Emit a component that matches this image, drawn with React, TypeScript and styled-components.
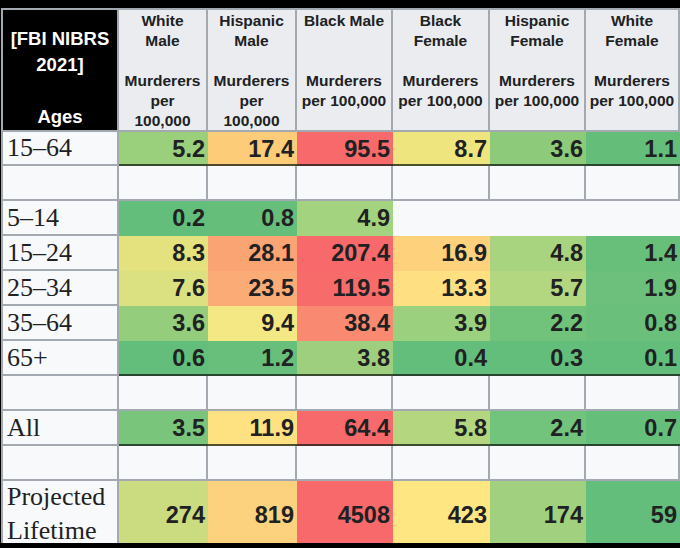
import styled, { createGlobalStyle } from "styled-components";

const GlobalStyle = createGlobalStyle`
  html, body {
    margin: 0;
    padding: 0;
    background: #000;
  }
  body {
    overflow: hidden;
  }
`;

const line = "#a2a9b1";

const Page = styled.div`
  width: 680px;
  height: 548px;
  box-sizing: border-box;
  padding: 8px 0 0 1px;
  background: #000;
  overflow: hidden;
`;

const Clip = styled.div`
  height: 535px;
  overflow: hidden;
`;

const Grid = styled.div`
  display: grid;
  grid-template-columns: 116px 89px 89px 96px 97px 96px 94px;
  grid-template-rows: 122px 34px repeat(9, 35px) 68px;
  width: max-content;
  border-top: 2px solid ${line};
  border-left: 2px solid ${line};
  background: #f8f9fa;
  color: #202122;
`;

const Corner = styled.div`
  box-sizing: border-box;
  display: flex;
  flex-direction: column;
  justify-content: flex-end;
  align-items: center;
  background: #000;
  color: #fff;
  font-family: "Liberation Sans", Arial, sans-serif;
  font-weight: 700;
  font-size: 18.5px;
  line-height: 26px;
  border-right: 2px solid ${line};
  border-bottom: 2px solid ${line};
`;

const CornerLine = styled.div`
  height: 26px;
  white-space: nowrap;
`;

const HeadCell = styled.div`
  box-sizing: border-box;
  padding-top: 1px;
  background: #eaecf0;
  font-family: "Liberation Sans", Arial, sans-serif;
  font-weight: 700;
  font-size: 15.5px;
  line-height: 20px;
  text-align: center;
  border-right: 2px solid ${line};
  border-bottom: 2px solid ${line};
`;

const HeadLine = styled.div`
  height: 20px;
  white-space: nowrap;
`;

const Label = styled.div<{ $tall?: boolean }>`
  box-sizing: border-box;
  display: flex;
  flex-direction: column;
  justify-content: center;
  padding-left: 4px;
  background: #f8f9fa;
  font-family: "Liberation Serif", "Times New Roman", serif;
  font-size: 26px;
  line-height: ${({ $tall }) => ($tall ? "34px" : "30px")};
  border-right: 2px solid ${line};
  border-bottom: 2px solid ${line};
  white-space: nowrap;
`;

const Blank = styled.div`
  box-sizing: border-box;
  background: #f8f9fa;
  border-right: 2px solid ${line};
  border-bottom: 2px solid ${line};
`;

const Filler = styled.div<{ $span: number }>`
  grid-column: span ${({ $span }) => $span};
  background: #f8f9fa;
`;

const Value = styled.div<{ $bg: string; $edge?: boolean }>`
  box-sizing: border-box;
  display: flex;
  align-items: center;
  justify-content: flex-end;
  padding-right: 3px;
  background: ${({ $bg }) => $bg};
  box-shadow: ${({ $edge }) => ($edge ? "inset 0 -2px 0 rgba(20, 30, 20, 0.75)" : "none")};
  font-family: "Liberation Sans", Arial, sans-serif;
  font-weight: 700;
  font-size: 23.5px;
  white-space: nowrap;
`;

const headers: string[][] = [
  ["White", "Male", "", "Murderers", "per", "100,000"],
  ["Hispanic", "Male", "", "Murderers", "per", "100,000"],
  ["Black Male", "", "", "Murderers", "per 100,000"],
  ["Black", "Female", "", "Murderers", "per 100,000"],
  ["Hispanic", "Female", "", "Murderers", "per 100,000"],
  ["White", "Female", "", "Murderers", "per 100,000"],
];

type Cell = [string, string];

type Row =
  | { kind: "blank" }
  | { kind: "data"; label: string[]; cells: Cell[]; edge?: boolean; tall?: boolean };

const rows: Row[] = [
  {
    kind: "data",
    label: ["15–64"],
    edge: true,
    cells: [
      ["5.2", "#9acf7b"],
      ["17.4", "#fdcc78"],
      ["95.5", "#f8696b"],
      ["8.7", "#efe57f"],
      ["3.6", "#8dcb7a"],
      ["1.1", "#64be79"],
    ],
  },
  { kind: "blank" },
  {
    kind: "data",
    label: ["5–14"],
    cells: [
      ["0.2", "#63be7b"],
      ["0.8", "#65bf7b"],
      ["4.9", "#a4d37f"],
    ],
  },
  {
    kind: "data",
    label: ["15–24"],
    cells: [
      ["8.3", "#e3e27f"],
      ["28.1", "#fba473"],
      ["207.4", "#f8696b"],
      ["16.9", "#fed27d"],
      ["4.8", "#a9d47f"],
      ["1.4", "#68bf7a"],
    ],
  },
  {
    kind: "data",
    label: ["25–34"],
    cells: [
      ["7.6", "#dbe081"],
      ["23.5", "#fbac76"],
      ["119.5", "#f86b6b"],
      ["13.3", "#fee083"],
      ["5.7", "#b3d680"],
      ["1.9", "#6cc07b"],
    ],
  },
  {
    kind: "data",
    label: ["35–64"],
    cells: [
      ["3.6", "#94ce7c"],
      ["9.4", "#f4e884"],
      ["38.4", "#f98a71"],
      ["3.9", "#9bd07e"],
      ["2.2", "#71c27b"],
      ["0.8", "#6ac07b"],
    ],
  },
  {
    kind: "data",
    label: ["65+"],
    edge: true,
    cells: [
      ["0.6", "#63be7b"],
      ["1.2", "#67bf7b"],
      ["3.8", "#9ecf7e"],
      ["0.4", "#64be7b"],
      ["0.3", "#64be7b"],
      ["0.1", "#63be7b"],
    ],
  },
  { kind: "blank" },
  {
    kind: "data",
    label: ["All"],
    edge: true,
    cells: [
      ["3.5", "#7ac57c"],
      ["11.9", "#fee282"],
      ["64.4", "#f8696b"],
      ["5.8", "#b4d67f"],
      ["2.4", "#72c37c"],
      ["0.7", "#65bf7b"],
    ],
  },
  { kind: "blank" },
  {
    kind: "data",
    label: ["Projected", "Lifetime"],
    tall: true,
    cells: [
      ["274", "#cbdb80"],
      ["819", "#fdd27f"],
      ["4508", "#f8696b"],
      ["423", "#fee683"],
      ["174", "#a1d17e"],
      ["59", "#63be7b"],
    ],
  },
];

const COLS = 6;

export default function App() {
  return (
    <Page>
      <GlobalStyle />
      <Clip>
        <Grid>
          <Corner>
            {["[FBI NIBRS", "2021]", "", "Ages"].map((t, i) => (
              <CornerLine key={i}>{t}</CornerLine>
            ))}
          </Corner>
          {headers.map((lines, i) => (
            <HeadCell key={i}>
              {lines.map((t, j) => (
                <HeadLine key={j}>{t}</HeadLine>
              ))}
            </HeadCell>
          ))}

          {rows.map((row, r) => {
            if (row.kind === "blank") {
              return Array.from({ length: COLS + 1 }, (_, c) => <Blank key={`${r}-${c}`} />);
            }
            const out = [
              <Label key={`${r}-l`} $tall={row.tall}>
                {row.label.map((t, i) => (
                  <div key={i}>{t}</div>
                ))}
              </Label>,
              ...row.cells.map(([v, bg], c) => (
                <Value key={`${r}-${c}`} $bg={bg} $edge={row.edge}>
                  {v}
                </Value>
              )),
            ];
            if (row.cells.length < COLS) {
              out.push(<Filler key={`${r}-f`} $span={COLS - row.cells.length} />);
            }
            return out;
          })}
        </Grid>
      </Clip>
    </Page>
  );
}
